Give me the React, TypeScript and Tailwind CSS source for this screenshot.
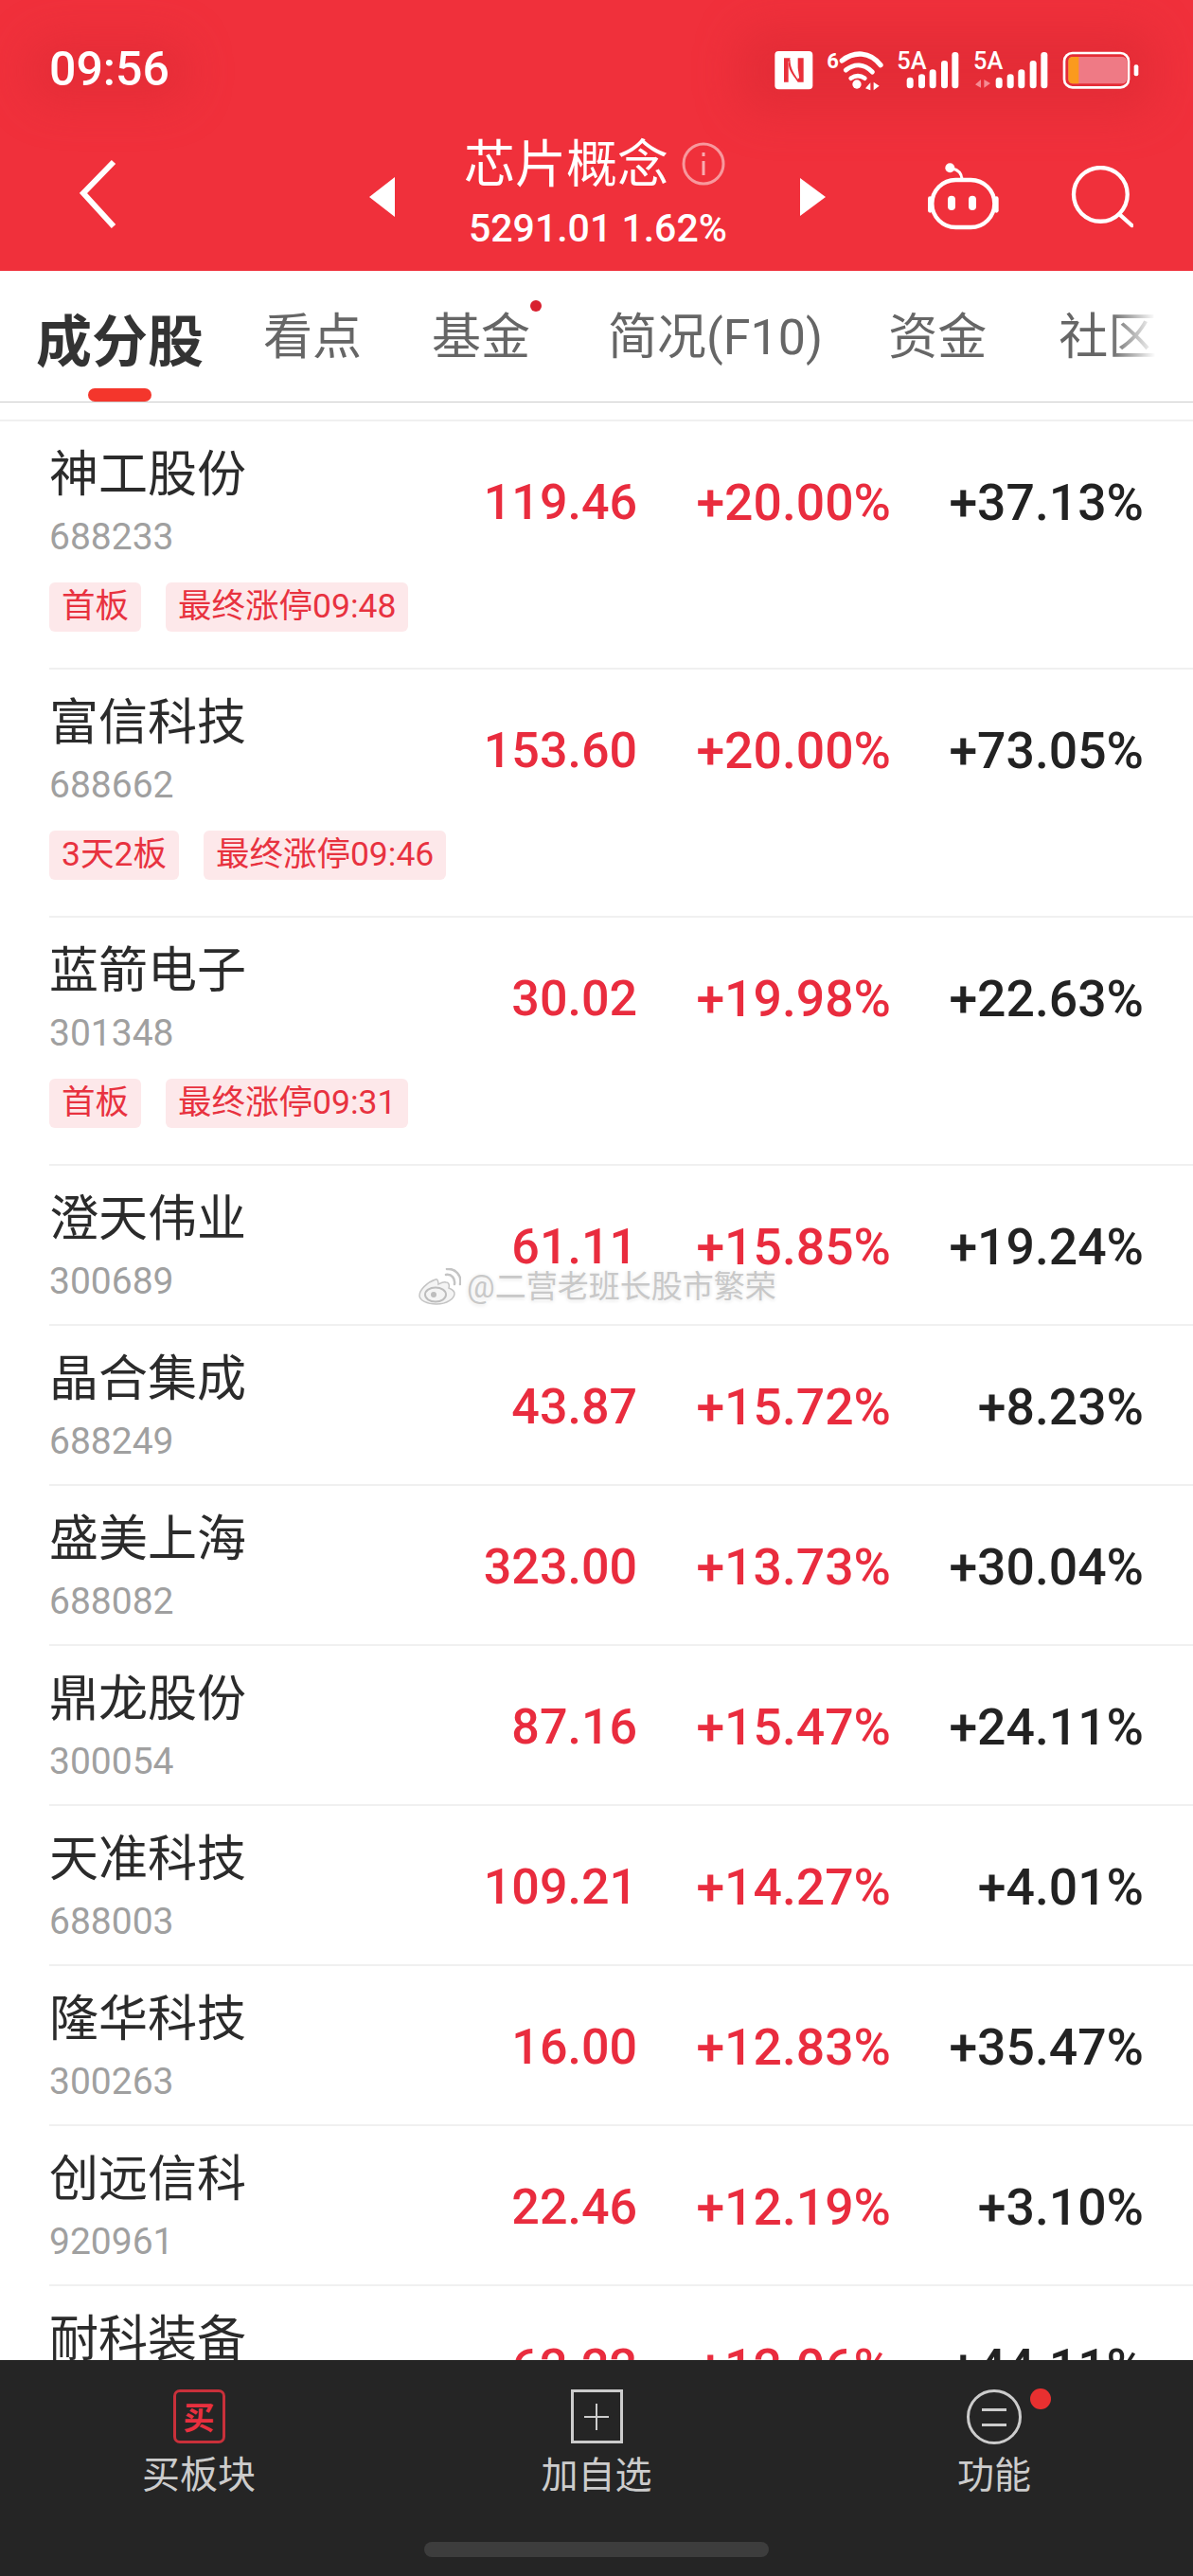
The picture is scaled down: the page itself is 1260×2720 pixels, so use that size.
import React from "react";

const CJK = "font-['Roboto','Noto_Sans_CJK_SC',sans-serif]";

type Row = { name: string; code: string; price: string; pct: string; chg: string; tags?: string[] };

const rows: Row[] = [
  { name: "神工股份", code: "688233", price: "119.46", pct: "+20.00%", chg: "+37.13%", tags: ["首板", "最终涨停09:48"] },
  { name: "富信科技", code: "688662", price: "153.60", pct: "+20.00%", chg: "+73.05%", tags: ["3天2板", "最终涨停09:46"] },
  { name: "蓝箭电子", code: "301348", price: "30.02", pct: "+19.98%", chg: "+22.63%", tags: ["首板", "最终涨停09:31"] },
  { name: "澄天伟业", code: "300689", price: "61.11", pct: "+15.85%", chg: "+19.24%" },
  { name: "晶合集成", code: "688249", price: "43.87", pct: "+15.72%", chg: "+8.23%" },
  { name: "盛美上海", code: "688082", price: "323.00", pct: "+13.73%", chg: "+30.04%" },
  { name: "鼎龙股份", code: "300054", price: "87.16", pct: "+15.47%", chg: "+24.11%" },
  { name: "天准科技", code: "688003", price: "109.21", pct: "+14.27%", chg: "+4.01%" },
  { name: "隆华科技", code: "300263", price: "16.00", pct: "+12.83%", chg: "+35.47%" },
  { name: "创远信科", code: "920961", price: "22.46", pct: "+12.19%", chg: "+3.10%" },
  { name: "耐科装备", code: "688419", price: "62.22", pct: "+12.06%", chg: "+44.11%" },
];

function StatusIcons() {
  const bars = (xs: number[]) => {
    const tops = [125, 115, 100, 72, 45];
    return xs.map((x, i) => <rect key={x} x={x} y={tops[i]} width="21" height={160 - tops[i]} rx="10" fill="#fff" />);
  };
  return (
    <svg width="410" height="70" viewBox="0 0 1230 210" className="block">
      <rect x="55" y="42" width="120" height="121" rx="12" fill="#fff" />
      <path d="M84 64h20c-2 26 6 40 24 68V64h18v76h-18c-18-26-34-44-28-66h-2v66H84z" fill="#e92f3a" />
      <path d="M104 66c14 10 24 26 26 62" fill="none" stroke="#fff" strokeWidth="5" />
      <text x="220" y="97" fontSize="66" fontWeight="700" fill="#fff" fontFamily="Roboto,sans-serif">6</text>
      <path d="M268 72c38-30 88-30 122 14" fill="none" stroke="#fff" strokeWidth="16" strokeLinecap="round" />
      <path d="M280 102c28-22 58-20 84 6" fill="none" stroke="#fff" strokeWidth="15" strokeLinecap="round" />
      <path d="M296 128c14-10 30-10 44 0" fill="none" stroke="#fff" strokeWidth="14" strokeLinecap="round" />
      <circle cx="315" cy="147" r="14" fill="#fff" />
      <path d="M342 160l16-18v24zM368 140v26l18-14z" fill="#fff" />
      <text x="442" y="98" fontSize="76" fontWeight="500" fill="#fff" fontFamily="Roboto,sans-serif">5A</text>
      {bars([473, 510, 545, 582, 616])}
      <text x="684" y="98" fontSize="76" fontWeight="500" fill="#fff" fontFamily="Roboto,sans-serif">5A</text>
      <path d="M690 148l18-16v26zM718 132v26l20-14z" fill="#f58b93" />
      {bars([755, 791, 826, 863, 898])}
      <rect x="972" y="48" width="204" height="109" rx="26" fill="none" stroke="#fff" strokeWidth="8" />
      <rect x="985" y="60" width="185" height="85" rx="14" fill="#ef7a85" />
      <path d="M999 60h19v85h-19a14 14 0 0 1-14-14V74a14 14 0 0 1 14-14z" fill="#fb9a1d" />
      <rect x="1193" y="85" width="14" height="36" rx="6" fill="#fff" />
    </svg>
  );
}

function RobotIcon() {
  return (
    <svg width="90" height="80" viewBox="0 0 270 240" fill="none" className="block">
      <rect x="16" y="60" width="198" height="150" rx="75" stroke="#fff" strokeWidth="13" />
      <rect x="3" y="112" width="14" height="52" rx="7" fill="#fff" />
      <rect x="213" y="112" width="14" height="52" rx="7" fill="#fff" />
      <rect x="66" y="110" width="24" height="46" rx="12" fill="#fff" />
      <rect x="132" y="110" width="24" height="46" rx="12" fill="#fff" />
      <circle cx="73" cy="22" r="15" fill="#fff" />
      <path d="M80 24c20 4 30 16 31 34" stroke="#fff" strokeWidth="9" />
    </svg>
  );
}

function SearchIcon() {
  return (
    <svg width="66" height="66" viewBox="0 0 200 200" fill="none" className="block">
      <circle cx="95" cy="92" r="86" stroke="#fff" strokeWidth="13" />
      <path d="M155 155l40 36" stroke="#fff" strokeWidth="13" strokeLinecap="round" />
    </svg>
  );
}

function WeiboIcon() {
  return (
    <svg width="46" height="40" viewBox="0 0 46 40" fill="none" className="block">
      <path d="M19 12C10 15 2 23 2 29c0 5 8 9 18 9 11 0 19-6 19-11 0-4-4-5-6-6 1-3 0-6-3-6-3-1-6 1-8 2 0-3-1-6-3-5z" fill="#f4f4f4" stroke="#c4c4c4" strokeWidth="1.5" />
      <ellipse cx="19" cy="28" rx="11" ry="7.5" stroke="#bdbdbd" strokeWidth="2" />
      <circle cx="17" cy="28" r="3" fill="#bdbdbd" />
      <path d="M30 7c6-1 10 4 9 10M31 1c9-1 16 7 14 16" stroke="#c4c4c4" strokeWidth="2.5" strokeLinecap="round" />
    </svg>
  );
}

function StockRow({ row, first }: { row: Row; first: boolean }) {
  return (
    <div className={first ? "" : "border-t-2 border-[#f0f0f0]"}>
      <div className={`flex items-start pr-[52px] ${row.tags ? "h-[260px]" : "h-[167px]"}`}>
        <div className="min-w-0 flex-1 pt-[27px]">
          <div className={`text-[52px] leading-[60px] text-[#2b2b2b] ${CJK}`}>{row.name}</div>
          <div className="mt-[13px] font-['Roboto',sans-serif] text-[39px] leading-[44px] text-[#a0a0a0]">{row.code}</div>
          {row.tags && (
            <div className="mt-[26px] flex gap-[26px]">
              {row.tags.map((t) => (
                <span key={t} className={`flex h-[52px] shrink-0 items-center whitespace-nowrap rounded-[6px] bg-[#fde8ea] px-[13px] text-[35.5px] leading-none text-[#e8323f] ${CJK}`}>
                  {t}
                </span>
              ))}
            </div>
          )}
        </div>
        <div className="w-[202px] pt-[56px] text-right font-['Roboto',sans-serif] text-[52px] leading-[60px] font-medium text-[#e92c3e]">{row.price}</div>
        <div className="w-[268px] pt-[56px] text-right font-['Roboto',sans-serif] text-[53.5px] leading-[60px] font-medium text-[#e92c3e]">{row.pct}</div>
        <div className="w-[267px] pt-[56px] text-right font-['Roboto',sans-serif] text-[53.5px] leading-[60px] font-medium text-[#222222]">{row.chg}</div>
      </div>
    </div>
  );
}

export default function App() {
  return (
    <div className="relative flex h-[2720px] w-[1260px] flex-col overflow-hidden bg-white">
      <header className="relative h-[286px] shrink-0 overflow-hidden bg-[#f0303b]">
        <div className="absolute left-[30px] top-[40px] h-[70px] w-[170px] rounded-[30px] bg-[#dc2a33]/50 blur-[22px]" />
        <div className="absolute left-[780px] top-[30px] h-[90px] w-[440px] rounded-[30px] bg-[#dc2a33]/60 blur-[22px]" />
        <div className="relative flex h-[145px] items-start">
          <div className="ml-[52px] mt-[46px] font-['Roboto',sans-serif] text-[50px] leading-[54px] font-medium text-white">09:56</div>
          <div className="ml-auto mr-[50px] mt-[40px]">
            <StatusIcons />
          </div>
        </div>
        <div className="relative flex h-[141px] items-start">
          <svg width="40" height="74" viewBox="0 0 40 74" fill="none" className="ml-[84px] mt-[23px]">
            <path d="M36 3L4 36l32 35" stroke="#fff" strokeWidth="6" />
          </svg>
          <svg width="28" height="42" viewBox="0 0 28 42" className="ml-[266px] mt-[42px]">
            <path d="M27 0v42L0 21z" fill="#fff" />
          </svg>
          <div className="ml-[72px] w-[291px]">
            <div className="flex items-center">
              <span className={`text-[54px] leading-[60px] text-white ${CJK}`}>芯片概念</span>
              <svg width="46" height="46" viewBox="0 0 46 46" fill="none" className="ml-[14px] mt-[-4px]">
                <circle cx="23" cy="23" r="21" stroke="#fff" strokeOpacity=".5" strokeWidth="3" />
                <path d="M23 20v15M23 11v4" stroke="#fff" strokeOpacity=".6" strokeWidth="3" />
              </svg>
            </div>
            <div className="ml-[5px] mt-[12px] whitespace-nowrap font-['Roboto',sans-serif] text-[41px] leading-[48px] font-medium text-white">5291.01 1.62%</div>
          </div>
          <svg width="27" height="40" viewBox="0 0 27 40" className="ml-[64px] mt-[43px]">
            <path d="M0 0v40l27-20z" fill="#fff" />
          </svg>
          <div className="ml-[107px] mt-[25px]">
            <RobotIcon />
          </div>
          <div className="ml-[62px] mt-[30px]">
            <SearchIcon />
          </div>
        </div>
      </header>

      <nav className="relative flex h-[139px] shrink-0 items-center border-b border-[#cccccc] pl-[38px] pt-[3px]">
        <span className="text-[59px] leading-none font-bold text-[#333333] font-['Noto_Sans_CJK_SC',sans-serif]">成分股</span>
        <span className={`ml-[63px] text-[52px] leading-none text-[#666666] ${CJK}`}>看点</span>
        <span className={`relative ml-[74px] text-[52px] leading-none text-[#666666] ${CJK}`}>
          基金
          <span className="absolute right-[-12px] top-[-14px] h-[12px] w-[12px] rounded-full bg-[#d8202f]" />
        </span>
        <span className={`ml-[82px] whitespace-nowrap text-[52px] leading-none text-[#666666] ${CJK}`}>简况(F10)</span>
        <span className={`ml-[69px] text-[52px] leading-none text-[#666666] ${CJK}`}>资金</span>
        <span className={`ml-[76px] text-[52px] leading-none text-[#666666] ${CJK}`}>社区</span>
        <div className="absolute inset-y-0 right-0 w-[88px] bg-gradient-to-r from-white/0 to-white to-[55%]" />
        <div className="absolute bottom-0 left-[93px] h-[14px] w-[67px] rounded-full bg-[#f4362c]" />
      </nav>

      <main className="relative min-h-0 flex-1 overflow-hidden pt-[18px]">
        <div className="border-t-2 border-[#f0f0f0]">
          <div className="pl-[52px]">
            {rows.map((r, i) => (
              <StockRow key={r.code} row={r} first={i === 0} />
            ))}
          </div>
        </div>
        <div className="absolute left-[441px] top-[914px] flex items-center gap-[6px]">
          <WeiboIcon />
          <span className={`text-[33px] leading-[40px] text-[#c8c8c8] [text-shadow:0_0_3px_#ffffff,0_1px_4px_#dddddd] ${CJK}`}>@二营老班长股市繁荣</span>
        </div>
      </main>

      <footer className="h-[228px] shrink-0 bg-[#252525]">
        <div className="grid grid-cols-3 pt-[31px]">
          <div className="flex flex-col items-center">
            <div className="flex h-[57px] w-[55px] items-center justify-center rounded-[7px] border-[3px] border-[#c9303a]">
              <span className="text-[33px] leading-none font-bold text-[#e8303f] font-['Noto_Sans_CJK_SC',sans-serif]">买</span>
            </div>
            <div className={`mt-[12px] text-[40px] leading-[44px] text-[#cccccc] ${CJK}`}>买板块</div>
          </div>
          <div className="flex flex-col items-center">
            <div className="relative flex h-[57px] w-[55px] items-center justify-center border-[3px] border-[#cccccc]">
              <div className="absolute h-[2px] w-[26px] bg-[#cccccc]" />
              <div className="absolute h-[28px] w-[2px] bg-[#cccccc]" />
            </div>
            <div className={`mt-[12px] text-[39px] leading-[44px] text-[#cccccc] ${CJK}`}>加自选</div>
          </div>
          <div className="flex flex-col items-center">
            <div className="relative flex h-[58px] w-[58px] flex-col items-center justify-center gap-[13px] rounded-full border-[3px] border-[#cccccc]">
              <div className="h-[3px] w-[26px] bg-[#cccccc]" />
              <div className="h-[3px] w-[26px] bg-[#cccccc]" />
              <div className="absolute left-[64px] top-[-4px] h-[22px] w-[22px] rounded-full bg-[#e93030]" />
            </div>
            <div className={`mt-[11px] text-[39px] leading-[44px] text-[#cccccc] ${CJK}`}>功能</div>
          </div>
        </div>
        <div className="mx-auto mt-[48px] h-[16px] w-[364px] rounded-[8px] bg-[#3d3d3d]" />
      </footer>
    </div>
  );
}
